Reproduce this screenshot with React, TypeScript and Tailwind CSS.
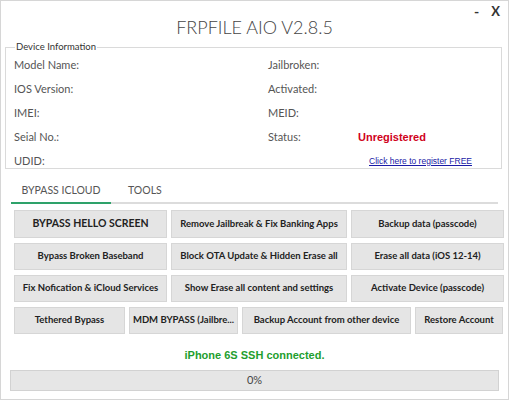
import React from "react";

const font = { fontFamily: 'Lato, "Open Sans", sans-serif' };
const arial = { fontFamily: '"Liberation Sans", Arial, sans-serif' };

const leftRows = ["Model Name:", "IOS Version:", "IMEI:", "Seial No.:", "UDID:"];
const rightRows = ["Jailbroken:", "Activated:", "MEID:", "Status:", ""];

const Btn = ({ label, className = "" }: { label: string; className?: string }) => (
  <button
    className={
      "flex h-[27px] items-center justify-center overflow-hidden whitespace-nowrap border border-[#d6d6d6] bg-[#e5e5e5] text-[9.5px] font-bold text-[#222] " +
      className
    }
  >
    {label}
  </button>
);

export default function App() {
  return (
    <div className="flex h-[400px] w-[509px] flex-col border border-[#d6d6d6] bg-white text-[#555]" style={font}>
      <div className="relative h-[40px]">
        <div className="pt-[13px] text-center text-[18px] font-light leading-[26px] text-[#444]">
          FRPFILE AIO V2.8.5
        </div>
        <div className="absolute right-[8px] top-[0px] flex items-start gap-[12px] text-[#333]">
          <span className="text-[14px] font-bold leading-[22px]">-</span>
          <span className="text-[13px] font-bold leading-[20px]">X</span>
        </div>
      </div>

      <fieldset className="mx-[4px] h-[128px] w-[497px] overflow-hidden border border-[#dadada] px-[8px]">
        <legend className="ml-[1px] px-[1px] text-[9.5px] leading-[12px] text-[#333]">Device Information</legend>
        <div className="grid grid-cols-[254px_90px_1fr] text-[11px]">
          {leftRows.map((l, i) => (
            <React.Fragment key={l}>
              <div className="flex h-[24px] items-center">{l}</div>
              <div className="flex h-[24px] items-center">{rightRows[i]}</div>
              <div className="flex h-[24px] items-center">
                {i === 3 && (
                  <span className="text-[11px] font-bold text-[#d0021b]" style={arial}>
                    Unregistered
                  </span>
                )}
                {i === 4 && (
                  <span className="ml-[11px] text-[8.5px] text-[#1a1aa6] underline" style={arial}>
                    Click here to register FREE
                  </span>
                )}
              </div>
            </React.Fragment>
          ))}
        </div>
      </fieldset>

      <div className="mx-[10px] mt-[11px] flex h-[24px] border-b-2 border-[#dcdcdc] text-[10.5px] text-[#555]">
        <div className="-mb-[2px] flex w-[100px] items-center justify-center border-b-2 border-[#2ea26a]">
          BYPASS ICLOUD
        </div>
        <div className="flex items-center pl-[17px]">TOOLS</div>
      </div>

      <div className="ml-[13px] mr-[7px] mt-[6px] flex flex-col gap-[5px]">
        <div className="grid grid-cols-[153px_176px_153px] gap-[4px]">
          <Btn label="BYPASS HELLO SCREEN" className="h-[28px] text-[10.5px]" />
          <Btn label="Remove Jailbreak & Fix Banking Apps" className="h-[28px]" />
          <Btn label="Backup data (passcode)" className="h-[28px]" />
        </div>
        <div className="grid grid-cols-[153px_176px_153px] gap-[4px]">
          <Btn label="Bypass Broken Baseband" />
          <Btn label="Block OTA Update & Hidden Erase all" />
          <Btn label="Erase all data (iOS 12-14)" />
        </div>
        <div className="grid grid-cols-[153px_176px_153px] gap-[4px]">
          <Btn label="Fix Nofication & iCloud Services" />
          <Btn label="Show Erase all content and settings" />
          <Btn label="Activate Device (passcode)" />
        </div>
        <div className="grid grid-cols-[111px_109px_169px_88px] gap-[4px]">
          <Btn label="Tethered Bypass" />
          <Btn label="MDM BYPASS (Jailbre..." />
          <Btn label="Backup Account from other device" />
          <Btn label="Restore Account" />
        </div>
      </div>

      <div className="mt-[15px] text-center text-[11px] font-bold leading-[13px] text-[#1e9e2e]" style={arial}>
        iPhone 6S SSH connected.
      </div>
      <div className="mx-[9px] mt-[8px] flex h-[21px] items-center justify-center border border-[#d2d2d2] bg-[#e6e6e6] text-[11px] text-[#444]">
        0%
      </div>
    </div>
  );
}
